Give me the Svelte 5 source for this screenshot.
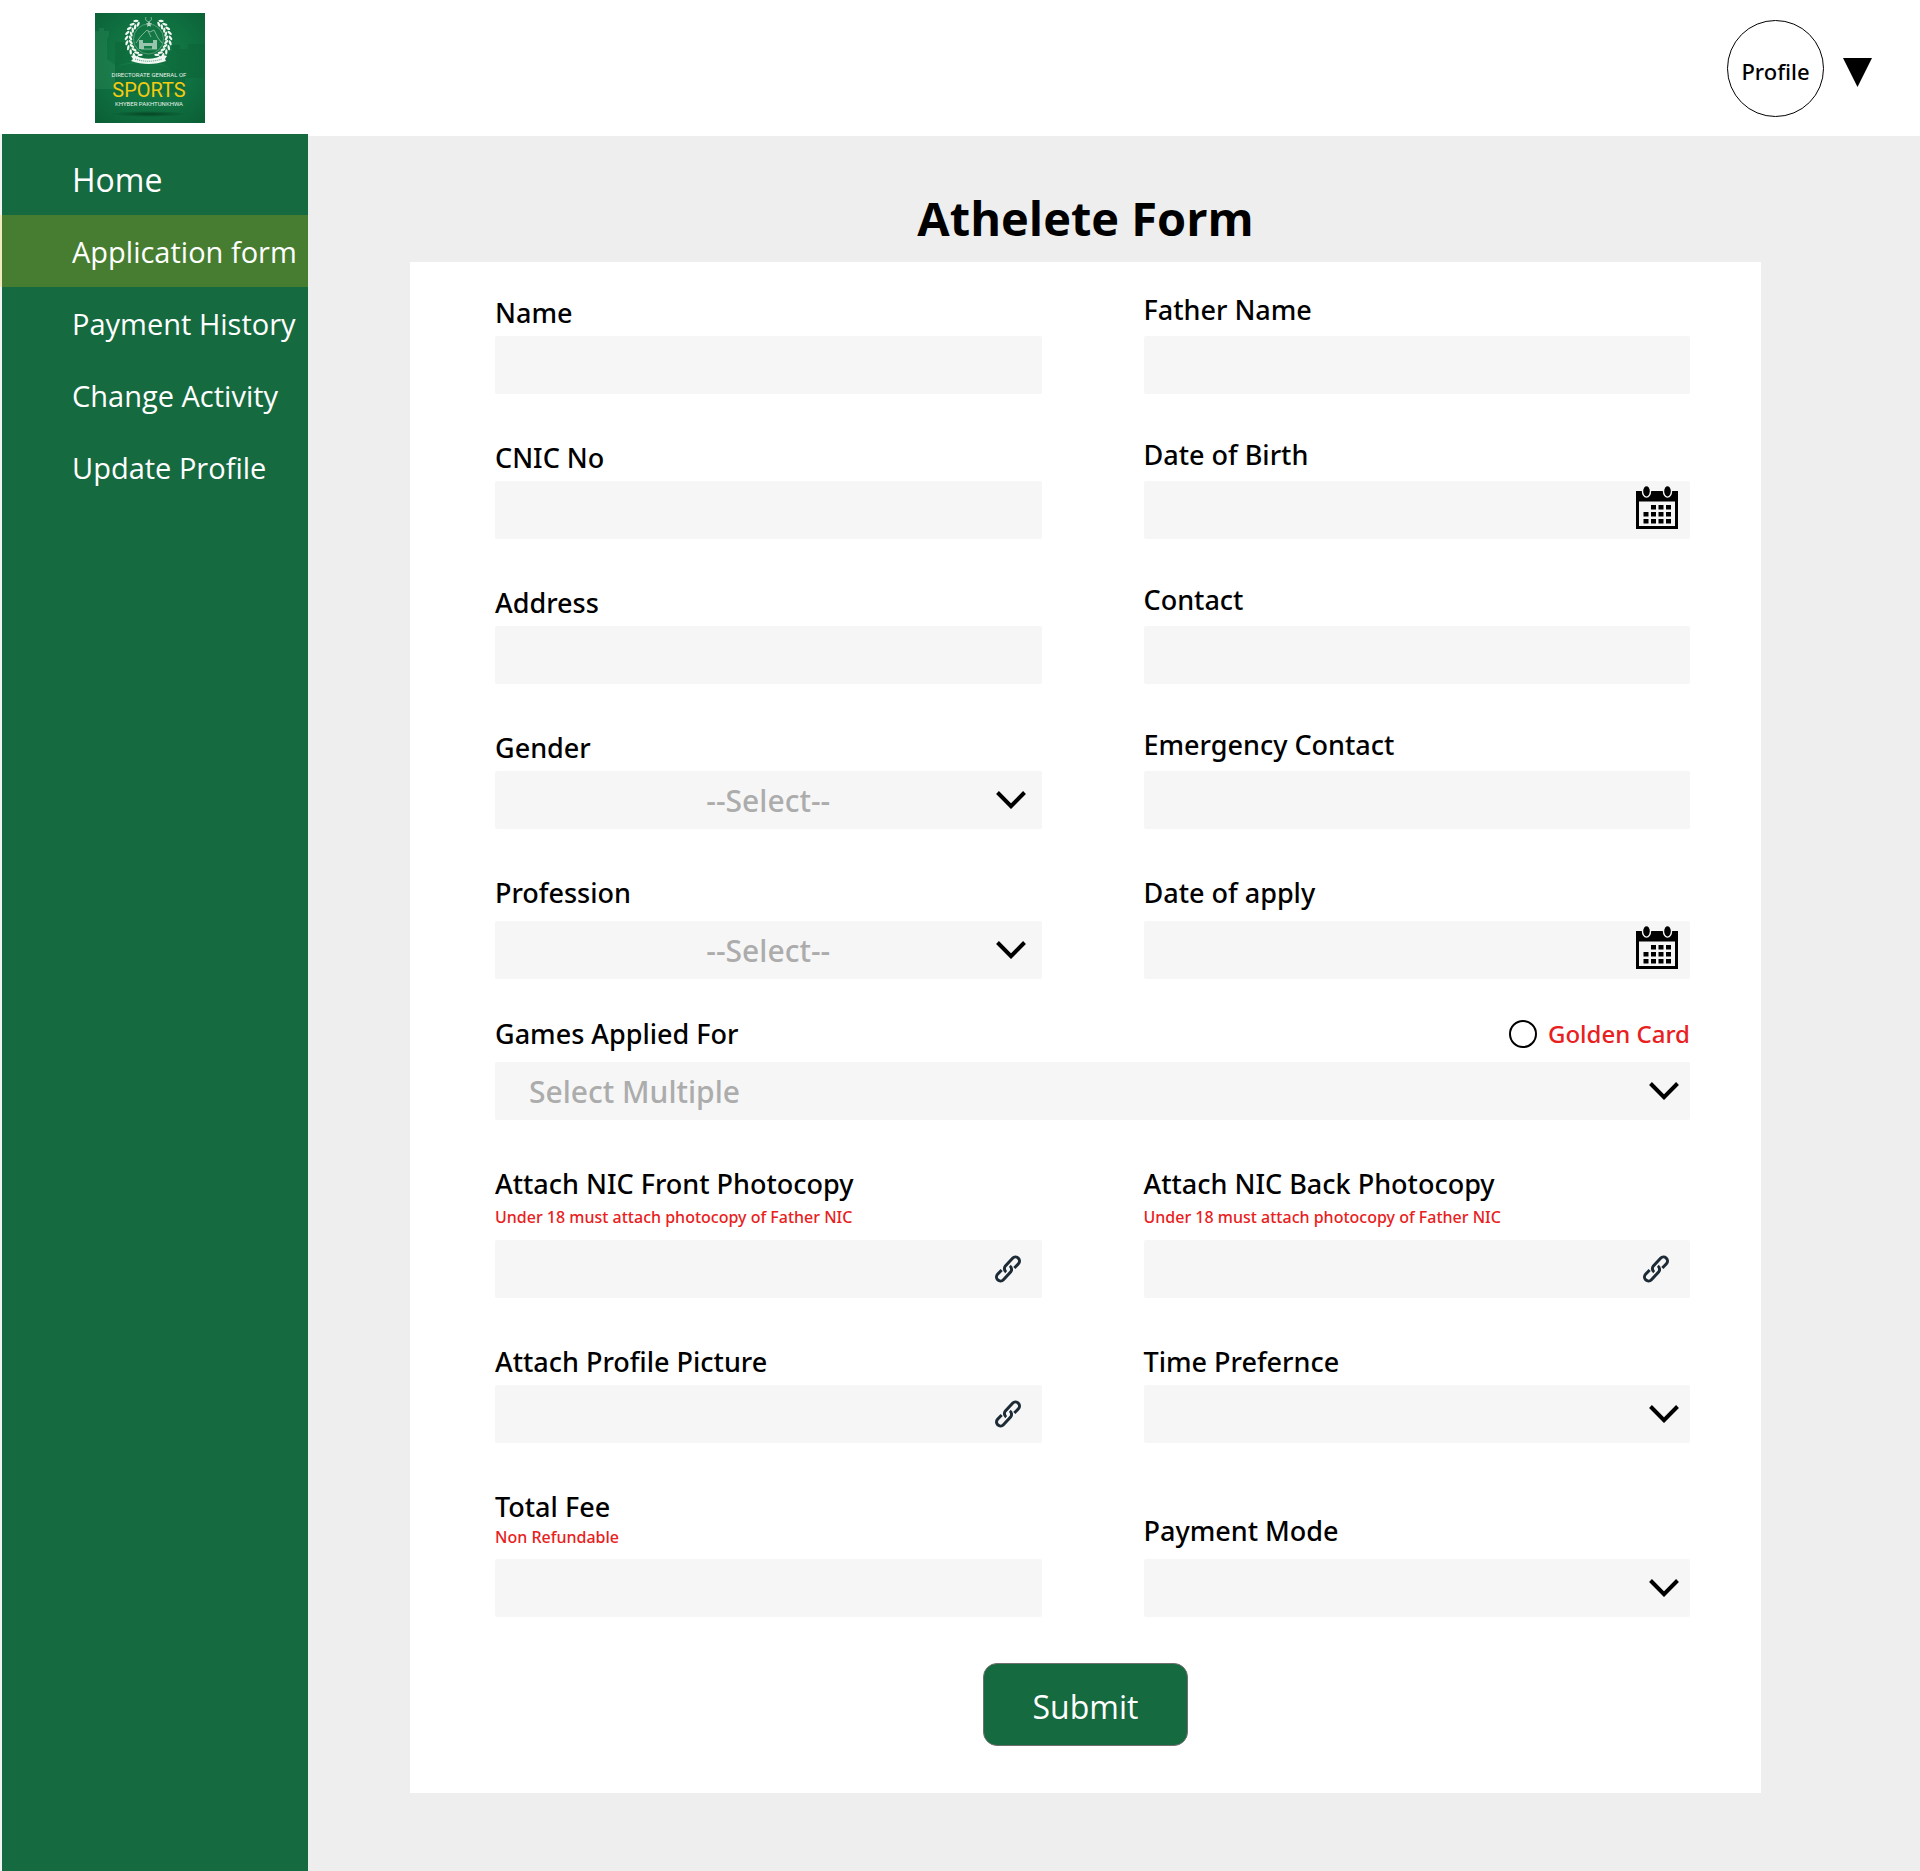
<script>
  const nav = [
    { label: 'Home', big: true },
    { label: 'Application form', active: true },
    { label: 'Payment History' },
    { label: 'Change Activity' },
    { label: 'Update Profile' }
  ];

  const rows = [
    { fields: [
      { id: 'name', label: 'Name', type: 'text' },
      { id: 'father', label: 'Father Name', type: 'text', gap: 'lift' }
    ] },
    { space: 'close', fields: [
      { id: 'cnic', label: 'CNIC No', type: 'text' },
      { id: 'dob', label: 'Date of Birth', type: 'date', gap: 'lift' }
    ] },
    { space: 'close', fields: [
      { id: 'address', label: 'Address', type: 'text' },
      { id: 'contact', label: 'Contact', type: 'text', gap: 'lift' }
    ] },
    { space: 'close', fields: [
      { id: 'gender', label: 'Gender', type: 'select', prompt: '--Select--' },
      { id: 'emergency', label: 'Emergency Contact', type: 'text', gap: 'lift' }
    ] },
    { fields: [
      { id: 'profession', label: 'Profession', type: 'select', prompt: '--Select--', gap: 'roomy' },
      { id: 'applied', label: 'Date of apply', type: 'date', gap: 'roomy' }
    ] },
    { space: 'tight', wide: true, fields: [
      { id: 'games', label: 'Games Applied For', type: 'select', prompt: 'Select Multiple', gap: 'roomy', golden: true }
    ] },
    { fields: [
      { id: 'nic-front', label: 'Attach NIC Front Photocopy', type: 'file', hint: 'Under 18 must attach photocopy of Father NIC' },
      { id: 'nic-back', label: 'Attach NIC Back Photocopy', type: 'file', hint: 'Under 18 must attach photocopy of Father NIC' }
    ] },
    { fields: [
      { id: 'picture', label: 'Attach Profile Picture', type: 'file' },
      { id: 'time', label: 'Time Prefernce', type: 'select', prompt: '' }
    ] },
    { fields: [
      { id: 'fee', label: 'Total Fee', type: 'text', hint: 'Non Refundable', snug: true },
      { id: 'payment', label: 'Payment Mode', type: 'select', prompt: '', gap: 'roomy' }
    ] }
  ];

  // Laurel leaves of the emblem, in pairs along both arcs of the wreath
  const leaves = [];
  for (const side of [-1, 1]) {
    for (let i = 0; i < 10; i++) {
      const deg = 28 + i * 13;
      const rad = (deg * Math.PI) / 180;
      for (const [r, tilt] of [[18, 32], [22, -32]]) {
        leaves.push({
          x: 53.5 + side * r * Math.sin(rad),
          y: 26 + r * Math.cos(rad),
          a: side * (-deg + tilt)
        });
      }
    }
  }

  // Day cells of the calendar icon
  const days = [];
  for (let r = 0; r < 3; r++)
    for (let c = 0; c < 4; c++) if (r || c) days.push([7.5 + c * 7.5, 19 + r * 7]);
</script>

<header>
  <a class="logo" href="#home" aria-label="Directorate General of Sports">
    <svg width="110" height="110" viewBox="0 0 110 110">
      <defs>
        <radialGradient id="glow" cx="50%" cy="45%" r="75%">
          <stop offset="0" stop-color="#17824a" />
          <stop offset="0.55" stop-color="#0f7040" />
          <stop offset="1" stop-color="#0a5e34" />
        </radialGradient>
        <radialGradient id="shade">
          <stop offset="0" stop-color="#064424" />
          <stop offset="1" stop-color="#064424" stop-opacity="0" />
        </radialGradient>
      </defs>
      <rect width="110" height="110" fill="url(#glow)" />
      <path d="M0 18h4v-3h5v3h5v5l-2 3v20l8 6v24H0z" fill="#2c8a58" opacity=".4" />
      <path d="M20 29h13v9h44v-6h8v4h8v-5h17v34H90C70 45 40 45 20 54z" fill="#0b6236" opacity=".45" />
      <path d="M20 54c20-6 50-6 70 8v18H20z" fill="#0b5a32" opacity=".3" />
      <ellipse cx="54" cy="101" rx="38" ry="3" fill="url(#shade)" />
      <g fill="#f1f7f3">
        {#each leaves as l}
          <ellipse cx={l.x} cy={l.y} rx="2.7" ry="1.2" transform="rotate({l.a} {l.x} {l.y})" />
        {/each}
        <path d="M36 43l3-1c9 5 20 5 29 0l4 1-2 3 1 2c-11 4-24 4-35 0l2-2z" />
        <path d="M44 27h4v3h10v-3h4v9h-5v-3h-8v3h-5z" opacity=".6" />
        <path d="M53 10l1-2 1 2 2 .5-1.500 1.200.5 2-2-1-2 1 .5-2L51 10.500z" opacity=".8" />
      </g>
      <path d="M40 46c9 3 18 3 27 0" fill="none" stroke="#4f9a72" stroke-width="1" stroke-dasharray="1 1" />
      <path d="M41 30l5-7 6-6 3 2 4-2 4 8 4 5M53 18l3 6M46 36h16M51 4a3 3 0 1 0 5 0" fill="none" stroke="#a9d0b9" stroke-width=".7" />
      <circle cx="53.500" cy="26" r="15" fill="none" stroke="#7fb899" stroke-width=".6" />
      <g text-anchor="middle" fill="#e6f2ea">
        <text class="logo-small" x="54" y="64">DIRECTORATE GENERAL OF</text>
        <text class="logo-big" x="54" y="84">SPORTS</text>
        <text class="logo-small" x="54" y="93">KHYBER PAKHTUNKHWA</text>
      </g>
    </svg>
  </a>
  <div class="account">
    <button class="profile" type="button">Profile</button>
    <button class="caret" type="button" aria-label="Open profile menu">
      <svg width="29" height="29" viewBox="0 0 29 29"><path d="M0 0h29L14.500 29z" /></svg>
    </button>
  </div>
</header>

<div class="body">
  <nav>
    {#each nav as item}
      <a href="#{item.label.toLowerCase().replace(' ', '-')}" class:active={item.active} class:big={item.big}>{item.label}</a>
    {/each}
  </nav>

  <main>
    <h1>Athelete Form</h1>
    <form onsubmit={(e) => e.preventDefault()}>
      {#each rows as row}
        <div class="row {row.space ?? ''}" class:wide={row.wide}>
          {#each row.fields as f}
            <div class="field {f.gap ?? ''}">
              <div class="top">
                <label for={f.id}>{f.label}</label>
                {#if f.golden}
                  <label class="golden"><input type="radio" name="card" value="golden" />Golden Card</label>
                {/if}
              </div>
              {#if f.hint}<p class="hint" class:snug={f.snug}>{f.hint}</p>{/if}
              <div class="control">
                {#if f.type === 'select'}
                  <select id={f.id} class:left={row.wide}><option>{f.prompt}</option></select>
                  <svg class="icon chevron" width="30" height="18" viewBox="0 0 30 18">
                    <path d="M1.500 1.500L15 15.200 28.500 1.500" fill="none" stroke="#000" stroke-width="4" />
                  </svg>
                {:else}
                  <input id={f.id} type={f.type} />
                {/if}
                {#if f.type === 'date'}
                  <svg class="icon calendar" width="42" height="43" viewBox="0 0 42 43">
                    <path d="M0 5h42v38H0z" />
                    <path d="M3 15.500h36V40H3z" fill="#f6f6f6" />
                    {#each [10.5, 31.5] as x}
                      <ellipse cx={x} cy="5.300" rx="4" ry="5.800" stroke="#f6f6f6" stroke-width="1.400" />
                    {/each}
                    {#each days as [x, y]}<rect {x} {y} width="5" height="4.500" />{/each}
                  </svg>
                {:else if f.type === 'file'}
                  <svg class="icon link" width="28" height="28" viewBox="-14 -14 28 28">
                    <g fill="none" stroke="#1c2b36" stroke-width="3" transform="rotate(-47)">
                      <path d="M-5 -4H-11A4 4 0 0 0 -11 4H-.5A4.300 4.300 0 0 0 3.500 -.8" />
                      <path d="M5 4H11A4 4 0 0 0 11 -4H.5A4.300 4.300 0 0 0 -3.500 .8" />
                    </g>
                  </svg>
                {/if}
              </div>
            </div>
          {/each}
        </div>
      {/each}
      <button class="submit" type="submit">Submit</button>
    </form>
  </main>
</div>

<style>
  :global(body) {
    background: #fff;
    color: #000;
    font-family: 'Segoe UI', 'Open Sans', 'Noto Sans', sans-serif;
  }
  :global(#app) {
    min-height: 100vh;
    display: flex;
    flex-direction: column;
  }
  *, *::before { box-sizing: border-box; }
  button, input, select { font: inherit; color: inherit; margin: 0; }

  header {
    height: 134px;
    display: flex;
    align-items: center;
    justify-content: space-between;
    padding: 2px 48px 0 95px;
  }
  .logo, .logo svg, .caret svg { display: block; }
  .logo-small { font: 6px 'Liberation Sans Narrow', 'Roboto', sans-serif; }
  .logo-big { font: 20px 'Liberation Sans Narrow', 'Roboto', sans-serif; fill: #f3cb12; }
  .account { display: flex; align-items: center; gap: 19px; }
  .profile {
    width: 97px;
    height: 97px;
    padding: 6px 0 0;
    border: 1px solid #000;
    border-radius: 50%;
    background: #fff;
    font-family: 'Noto Sans', sans-serif;
    font-size: 22px;
    font-weight: 500;
  }
  .caret { padding: 8px 0 0; border: 0; background: none; }

  .body { flex: 1; display: flex; }
  nav {
    flex: none;
    width: 308px;
    padding-top: 9px;
    background: #166a40;
    border-left: 2px solid #f3f5f4;
  }
  nav a {
    display: flex;
    align-items: center;
    height: 72px;
    padding-left: 70px;
    color: #fff;
    font-size: 29px;
    text-decoration: none;
    white-space: nowrap;
  }
  nav a.big { font-size: 32px; }
  nav a.active {
    margin-left: -2px;
    border-left: 2px solid #f3ebc0;
    background: #467d31;
  }

  main {
    flex: 1;
    margin-top: 2px;
    padding: 48px 159px 77px 102px;
    background: #eee;
  }
  h1 {
    margin: 0 0 10px;
    font-size: 47px;
    line-height: 68px;
    font-weight: 700;
    text-align: center;
  }
  form {
    display: flex;
    flex-direction: column;
    padding: 0 71px 47px;
    background: #fff;
  }
  .row {
    display: grid;
    grid-template-columns: 1fr 1fr;
    column-gap: 102px;
    align-items: end;
    padding: 46px 0 0 14px;
  }
  .row:first-child { padding-top: 30px; }
  .row.wide { grid-template-columns: 1fr; }
  .row.close { padding-top: 43px; }
  .row.tight { padding-top: 37px; }

  .top {
    display: flex;
    justify-content: space-between;
    margin-bottom: 5px;
    font-family: 'Noto Sans', sans-serif;
    font-size: 27px;
    line-height: 36px;
    font-weight: 500;
  }
  .lift .top { margin-bottom: 8px; }
  .roomy .top { margin-bottom: 10px; }
  .golden {
    display: flex;
    align-items: center;
    gap: 11px;
    color: #e82020;
    font-size: 24px;
  }
  .golden input {
    appearance: none;
    width: 28px;
    height: 28px;
    border: 2px solid #000;
    border-radius: 50%;
  }
  .golden input:checked { background: radial-gradient(#000 45%, transparent 50%); }
  .hint {
    margin: 0 0 13px;
    color: #e82020;
    font-family: 'Noto Sans', sans-serif;
    font-size: 16px;
    line-height: 20px;
    font-weight: 500;
  }
  .hint.snug { margin: -3px 0 12px; }

  .control { position: relative; }
  .control input, select {
    display: block;
    width: 100%;
    height: 58px;
    padding: 0 34px;
    border: 0;
    border-radius: 2px;
    background: #f6f6f6;
    font-size: 24px;
  }
  .control select {
    appearance: none;
    color: #acacac;
    font-family: 'Noto Sans', sans-serif;
    font-size: 30px;
    font-weight: 500;
    text-align-last: center;
  }
  .control select.left { text-align-last: left; }
  input[type='file'] { color: transparent; }
  input[type='file']::file-selector-button { display: none; }
  input[type='date']::-webkit-datetime-edit { visibility: hidden; }
  input[type='date']::-webkit-calendar-picker-indicator { opacity: 0; }
  .icon {
    position: absolute;
    top: 0;
    bottom: 0;
    right: 11px;
    margin: auto 0;
    pointer-events: none;
  }
  .icon.calendar { top: 5px; right: 12px; margin: 0; }
  .icon.link { right: 20px; }
  .field:first-child .chevron { right: 16px; }
  .wide .field:first-child .chevron { right: 11px; }

  .submit {
    align-self: center;
    width: 205px;
    height: 83px;
    margin-top: 46px;
    padding: 4px 0 0;
    border: 1px solid #707070;
    border-radius: 14px;
    background: #166a40;
    color: #fff;
    font-size: 32px;
  }
</style>
